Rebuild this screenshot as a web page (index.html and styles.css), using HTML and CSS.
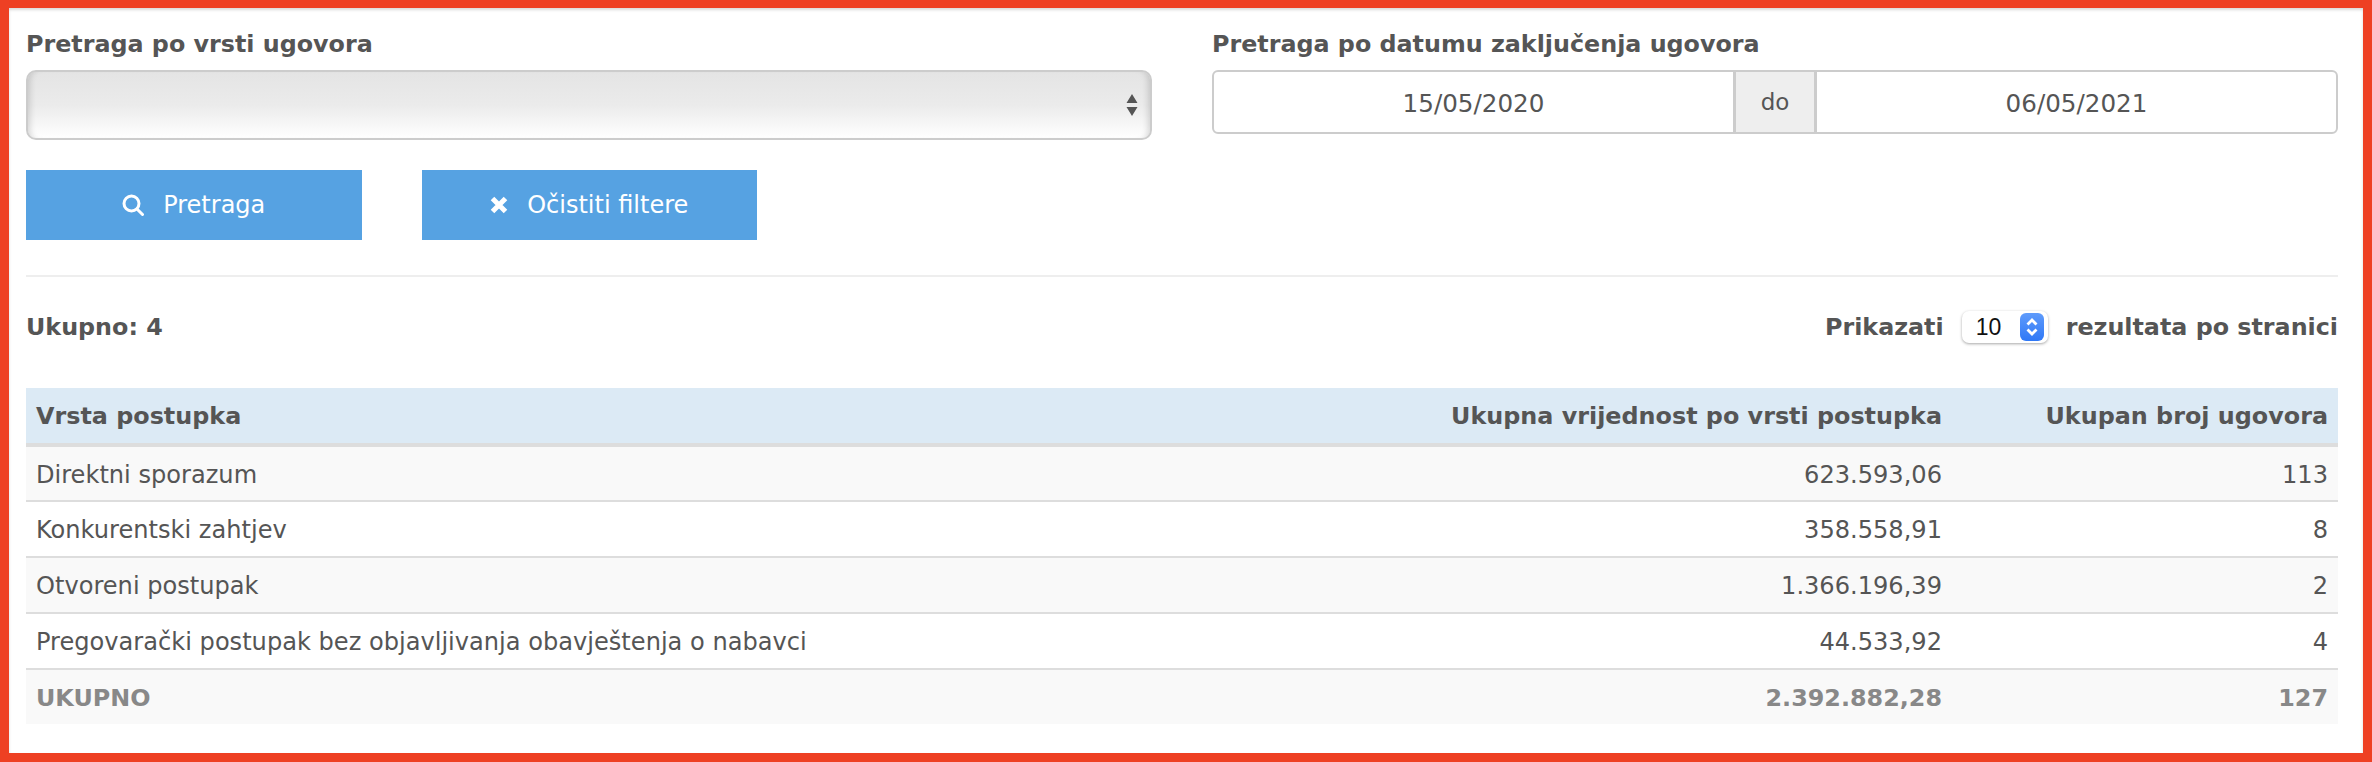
FILE: index.html
```html
<!DOCTYPE html>
<html lang="bs">
<head>
<meta charset="utf-8">
<title>Pretraga ugovora</title>
<link rel="stylesheet" href="styles.css">
</head>
<body>
<main class="frame">
  <section class="filters">
    <div class="field">
      <label class="label">Pretraga po vrsti ugovora</label>
      <div class="select-box">
        <svg class="arrows" width="12" height="24" viewBox="0 0 12 24"><path d="M6 1l5.500 9H.5z M.5 14h11L6 23z" fill="#555"/></svg>
      </div>
    </div>
    <div class="field">
      <label class="label">Pretraga po datumu zaključenja ugovora</label>
      <div class="date-group">
        <div class="date-input">15/05/2020</div>
        <div class="date-sep">do</div>
        <div class="date-input">06/05/2021</div>
      </div>
    </div>
  </section>
  <div class="actions">
    <button class="btn" type="button">
      <svg width="22" height="22" viewBox="0 0 22 22" fill="none" stroke="#fff" stroke-width="3"><circle cx="9.500" cy="9.500" r="7.500"/><path d="M15 15l5.500 5.500" stroke-linecap="round"/></svg>
      <span>Pretraga</span>
    </button>
    <button class="btn" type="button">
      <svg width="18" height="18" viewBox="0 0 18 18" fill="none" stroke="#fff" stroke-width="5"><path d="M2.500 2.500l13 13M15.500 2.500l-13 13"/></svg>
      <span>Očistiti filtere</span>
    </button>
  </div>
  <hr class="rule">
  <div class="info">
    <strong>Ukupno: 4</strong>
    <div class="per-page">
      <strong>Prikazati</strong>
      <div class="mini-select">
        <span>10</span>
        <span class="mini-arrows">
          <svg width="14" height="20" viewBox="0 0 14 20" fill="none" stroke="#fff" stroke-width="2.800"><path d="M2.500 7.500L7 3l4.500 4.500M2.500 12.500L7 17l4.500-4.500"/></svg>
        </span>
      </div>
      <strong>rezultata po stranici</strong>
    </div>
  </div>
  <table class="results">
    <thead>
      <tr><th>Vrsta postupka</th><th class="num">Ukupna vrijednost po vrsti postupka</th><th class="num col-count">Ukupan broj ugovora</th></tr>
    </thead>
    <tbody>
      <tr><td>Direktni sporazum</td><td class="num">623.593,06</td><td class="num">113</td></tr>
      <tr><td>Konkurentski zahtjev</td><td class="num">358.558,91</td><td class="num">8</td></tr>
      <tr><td>Otvoreni postupak</td><td class="num">1.366.196,39</td><td class="num">2</td></tr>
      <tr><td>Pregovarački postupak bez objavljivanja obavještenja o nabavci</td><td class="num">44.533,92</td><td class="num">4</td></tr>
    </tbody>
    <tfoot>
      <tr><td>UKUPNO</td><td class="num">2.392.882,28</td><td class="num">127</td></tr>
    </tfoot>
  </table>
</main>
</body>
</html>
```

FILE: styles.css
```css
* { box-sizing: border-box; }
html, body { margin: 0; padding: 0; background: #fff; }
body {
  font-family: "DejaVu Sans", Verdana, sans-serif;
  font-size: 24px;
  color: #555;
}
strong { font-size: 23.800px; }
.frame {
  height: 762px;
  border: solid #ee4023;
  border-width: 8px 9px 9px 9px;
  padding: 21px 25px 0 17px;
  box-shadow: inset 0 2px 3px rgba(0,0,0,.15);
}
.filters {
  display: grid;
  grid-template-columns: 1fr 1fr;
  column-gap: 60px;
}
.label {
  display: block;
  font-weight: bold;
  font-size: 23.800px;
  line-height: 30px;
  margin-bottom: 11px;
}
.select-box {
  height: 70px;
  border: 2px solid #ccc;
  border-radius: 10px;
  background: linear-gradient(#e4e4e4 0%, #ebebeb 50%, #fff 100%);
  box-shadow: inset 7px 0 6px -5px rgba(0,0,0,.15), inset -7px 0 6px -5px rgba(0,0,0,.15);
  display: flex;
  align-items: center;
  justify-content: flex-end;
  padding-right: 12px;
}
.date-group {
  display: flex;
  height: 64px;
  border: 2px solid #ccc;
  border-radius: 6px;
}
.date-input {
  flex: 1;
  display: flex;
  align-items: center;
  justify-content: center;
  font-size: 24.600px;
  padding-top: 2px;
}
.date-sep {
  width: 84px;
  display: flex;
  align-items: center;
  justify-content: center;
  background: #eee;
  border-left: 3px solid #ccc;
  border-right: 3px solid #ccc;
  font-size: 23px;
}
.actions {
  display: flex;
  gap: 60px;
  margin-top: 30px;
}
.btn {
  width: 335.500px;
  height: 70px;
  border: 0;
  padding: 0;
  background: #56a2e2;
  color: #fff;
  font: inherit;
  display: flex;
  align-items: center;
  justify-content: center;
  gap: 19px;
}
.rule {
  border: 0;
  border-top: 2px solid #eee;
  margin: 35px 0 33px;
}
.info {
  display: flex;
  justify-content: space-between;
  align-items: center;
  height: 34px;
}
.per-page {
  display: flex;
  align-items: center;
  gap: 18px;
}
.mini-select {
  width: 86px;
  height: 32px;
  border-radius: 7px;
  background: #fff;
  box-shadow: 0 1px 3px rgba(0,0,0,.35);
  display: flex;
  align-items: center;
  justify-content: space-between;
  padding: 0 4px 0 14px;
  color: #111;
  font-family: "Liberation Sans", sans-serif;
  font-size: 23px;
}
.mini-arrows {
  width: 24px;
  height: 28px;
  border-radius: 6px;
  background: linear-gradient(#5f9bfb, #2f78f6);
  display: flex;
  align-items: center;
  justify-content: center;
}
.results {
  width: 100%;
  margin-top: 44px;
  border-collapse: collapse;
  table-layout: fixed;
}
.results th, .results td {
  padding: 0 10px;
  text-align: left;
  font-weight: normal;
}
.results th {
  height: 57px;
  background: #dceaf5;
  font-weight: bold;
  font-size: 23.850px;
  border-bottom: 4px solid #ddd;
}
.results td {
  height: 56px;
  font-size: 24.100px;
  padding-top: 2px;
  border-bottom: 2px solid #ddd;
}
.results .num { text-align: right; }
.results th:nth-child(1) { width: 1000px; }
.results .col-count { width: 386px; }
.results tbody tr:nth-child(odd) td { background: #f9f9f9; }
.results tfoot td {
  height: 55px;
  background: #f9f9f9;
  border-bottom: 0;
  font-weight: bold;
  font-size: 23.850px;
  color: #888;
}
```
